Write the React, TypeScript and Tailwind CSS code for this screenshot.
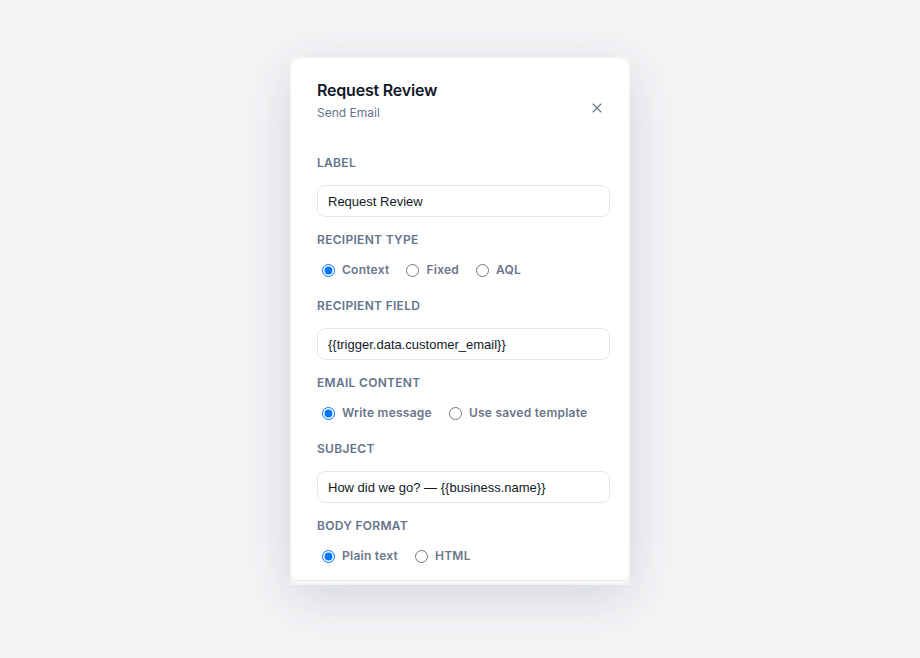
import React, { useState } from 'react';
import { X } from 'lucide-react';

type Option = { value: string; label: string };

const labelClass =
  "text-[12px] leading-4 font-semibold uppercase tracking-wide text-[#64748b] font-['Inter',sans-serif]";

function TextField({ label, value }: { label: string; value: string }) {
  const [text, setText] = useState(value);
  return (
    <div className="flex flex-col gap-[14px]">
      <label className={labelClass}>{label}</label>
      <input
        value={text}
        onChange={(e) => setText(e.target.value)}
        className="h-8 w-full rounded-lg border border-[#e5e7eb] bg-white px-[10px] text-[13px] text-[#111827] font-['Liberation_Sans',Arial,sans-serif] outline-none"
      />
    </div>
  );
}

function RadioField({
  label,
  name,
  options,
  initial,
}: {
  label: string;
  name: string;
  options: Option[];
  initial: string;
}) {
  const [selected, setSelected] = useState(initial);
  return (
    <div className="flex flex-col gap-3 pb-[3px]">
      <span className={labelClass}>{label}</span>
      <div className="flex h-5 items-center gap-3">
        {options.map((opt) => (
          <label key={opt.value} className="inline-flex items-center gap-1 cursor-pointer">
            <input
              type="radio"
              name={name}
              value={opt.value}
              checked={selected === opt.value}
              onChange={() => setSelected(opt.value)}
              className="m-0 ml-[5px] mr-[3px] h-[13px] w-[13px]"
            />
            <span className="text-[12px] leading-5 font-semibold tracking-[0.25px] text-[#6b7689] font-['Inter',sans-serif]">
              {opt.label}
            </span>
          </label>
        ))}
      </div>
    </div>
  );
}

export default function App() {
  return (
    <div className="min-h-screen bg-[#f4f5f7] flex justify-center pt-[57px] font-['Inter',sans-serif]">
      <div className="w-[340px] h-fit p-px bg-[#f1f3f5] shadow-[0_12px_50px_rgba(30,41,59,0.16)]">
        <div className="rounded-xl bg-white overflow-hidden">
          <div className="pl-[26px] pr-[19px] pt-5 pb-[11px]">
            {/* header */}
            <div className="flex items-start justify-between">
              <div>
                <h2 className="text-[16px] leading-6 font-semibold tracking-[-0.2px] text-[#111827]">
                  Request Review
                </h2>
                <p className="mt-[3px] text-[12px] leading-4 text-[#64748b]">Send Email</p>
              </div>
              <button className="mt-[18px] mr-px p-1 text-[#64748b]">
                <X size={16} strokeWidth={1.6} />
              </button>
            </div>

            {/* form */}
            <div className="mt-[34px] flex flex-col gap-[15px]">
              <TextField label="Label" value="Request Review" />
              <RadioField
                label="Recipient type"
                name="recipient-type"
                initial="context"
                options={[
                  { value: 'context', label: 'Context' },
                  { value: 'fixed', label: 'Fixed' },
                  { value: 'aql', label: 'AQL' },
                ]}
              />
              <TextField label="Recipient field" value="{{trigger.data.customer_email}}" />
              <RadioField
                label="Email content"
                name="email-content"
                initial="write"
                options={[
                  { value: 'write', label: 'Write message' },
                  { value: 'template', label: 'Use saved template' },
                ]}
              />
              <TextField label="Subject" value="How did we go? — {{business.name}}" />
              <RadioField
                label="Body format"
                name="body-format"
                initial="plain"
                options={[
                  { value: 'plain', label: 'Plain text' },
                  { value: 'html', label: 'HTML' },
                ]}
              />
            </div>
          </div>
          <div className="h-1 border-t border-[#e5e7eb] bg-[#f8f9fa]" />
        </div>
      </div>
    </div>
  );
}
